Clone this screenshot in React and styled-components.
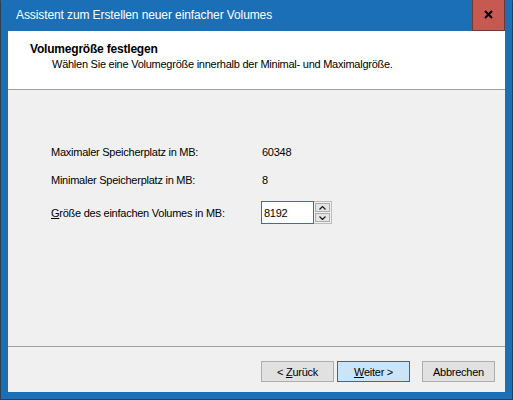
import React from 'react';
import styled, { createGlobalStyle } from 'styled-components';

const Global = createGlobalStyle`
    html, body {
        margin: 0;
        padding: 0;
        background: #1b6fb7;
    }
    body {
        font-family: "Liberation Sans", Arial, sans-serif;
        font-size: 11px;
        letter-spacing: -0.25px;
        color: #000;
    }
`;

const Fenster = styled.div`
    width: 513px;
    height: 400px;
    box-sizing: border-box;
    border: 1px solid #2b3f55;
    border-top-color: #1b6fb7;
    background: #1b6fb7;
    padding: 0 7px 7px 7px;
    display: flex;
    flex-direction: column;
`;

const Titelleiste = styled.div`
    height: 30px;
    display: flex;
    align-items: center;
    justify-content: space-between;
    flex-shrink: 0;
`;

const Titel = styled.span`
    color: #fff;
    font-family: "Liberation Sans", Arial, sans-serif;
    font-size: 12px;
    letter-spacing: -0.1px;
    padding-left: 8px;
    padding-bottom: 2px;
`;

const Schliessen = styled.div`
    width: 33px;
    height: 31px;
    margin-top: -1px;
    box-sizing: border-box;
    background: #c75a50;
    border: 1px solid #6e3a36;
    border-top: none;
    display: flex;
    align-items: center;
    justify-content: center;
    padding-bottom: 2px;
`;

const Inhalt = styled.div`
    flex: 1;
    background: #f0f0f0;
    display: flex;
    flex-direction: column;
`;

const Kopf = styled.div`
    height: 59px;
    background: #fff;
    border-bottom: 1px solid #a0a0a0;
    padding: 11px 0 0 22px;
    box-sizing: border-box;
    flex-shrink: 0;
    h1 {
        margin: 0;
        font-size: 12px;
        letter-spacing: -0.2px;
        font-weight: bold;
        line-height: 14px;
    }
    p {
        margin: 1px 0 0 22px;
        font-size: 11px;
        line-height: 14px;
    }
`;

const Formular = styled.div`
    flex: 1;
    padding: 55px 0 0 43px;
    display: grid;
    grid-template-columns: 210px auto;
    row-gap: 14px;
    align-content: start;
    align-items: center;
    line-height: 14px;
`;

const Wert = styled.span`
    padding-left: 1px;
`;

const Eingabe = styled.div`
    display: flex;
    align-items: stretch;
    height: 23px;
`;

const Feld = styled.div`
    width: 53px;
    box-sizing: border-box;
    border: 1px solid #3a6ea5;
    background: #fff;
    padding: 0 0 0 2px;
    display: flex;
    align-items: center;
`;

const Spinner = styled.div`
    width: 18px;
    box-sizing: border-box;
    border: 1px solid #bcbcbc;
    border-left: none;
    background: #f0f0f0;
    display: flex;
    flex-direction: column;
    gap: 1px;
    padding: 1px;
`;

const SpinKnopf = styled.div`
    flex: 1;
    background: #e5e5e5;
    border: 1px solid #acacac;
    display: flex;
    align-items: center;
    justify-content: center;
`;

const Fuss = styled.div`
    border-top: 1px solid #a0a0a0;
    height: 46px;
    box-sizing: border-box;
    padding: 14px 10px 0 0;
    display: flex;
    justify-content: flex-end;
    flex-shrink: 0;
`;

const Knopf = styled.button`
    width: 73px;
    height: 21px;
    box-sizing: border-box;
    font-family: "Liberation Sans", Arial, sans-serif;
    font-size: 11px;
    letter-spacing: -0.25px;
    color: #000;
    padding: 0;
    margin-left: ${props => props.abstand}px;
    background: ${props => props.standard ? '#cce4f7' : '#e1e1e1'};
    border: 1px solid ${props => props.standard ? '#0078d7' : '#adadad'};
    u {
        text-decoration: underline;
    }
`;

function Pfeil({ runter }) {
    return (
        <svg width="7" height="4" viewBox="0 0 7 4">
            <path
                d={runter ? 'M0.5 0.5 L3.5 3.5 L6.5 0.5' : 'M0.5 3.5 L3.5 0.5 L6.5 3.5'}
                fill="none"
                stroke="#202020"
                strokeWidth="1.3"
            />
        </svg>
    );
}

export default function App() {
    return (
        <>
            <Global />
            <Fenster>
                <Titelleiste>
                    <Titel>Assistent zum Erstellen neuer einfacher Volumes</Titel>
                    <Schliessen>
                        <svg width="9" height="9" viewBox="0 0 9 9">
                            <path d="M1 1 L8 8 M8 1 L1 8" stroke="#000" strokeWidth="2" />
                        </svg>
                    </Schliessen>
                </Titelleiste>
                <Inhalt>
                    <Kopf>
                        <h1>Volumegröße festlegen</h1>
                        <p>Wählen Sie eine Volumegröße innerhalb der Minimal- und Maximalgröße.</p>
                    </Kopf>
                    <Formular>
                        <span>Maximaler Speicherplatz in MB:</span>
                        <Wert>60348</Wert>
                        <span>Minimaler Speicherplatz in MB:</span>
                        <Wert>8</Wert>
                        <span><u>G</u>röße des einfachen Volumes in MB:</span>
                        <Eingabe>
                            <Feld>8192</Feld>
                            <Spinner>
                                <SpinKnopf><Pfeil /></SpinKnopf>
                                <SpinKnopf><Pfeil runter /></SpinKnopf>
                            </Spinner>
                        </Eingabe>
                    </Formular>
                    <Fuss>
                        <Knopf abstand={0}>&lt; <u>Z</u>urück</Knopf>
                        <Knopf abstand={3} standard><u>W</u>eiter &gt;</Knopf>
                        <Knopf abstand={12}>Abbrechen</Knopf>
                    </Fuss>
                </Inhalt>
            </Fenster>
        </>
    );
}
